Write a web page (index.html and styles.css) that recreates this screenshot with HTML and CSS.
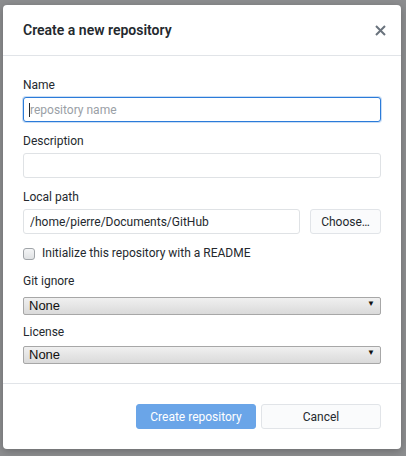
FILE: index.html
```html
<!DOCTYPE html>
<html>
<head>
<meta charset="utf-8">
<link rel="stylesheet" href="styles.css">
</head>
<body>
<div class="dialog">
  <div class="header">
    <h1 class="title">Create a new repository</h1>
    <span class="close">
      <svg width="11" height="11" viewBox="0 0 11 11"><path d="M1 1L10 10M10 1L1 10" stroke="#6a737d" stroke-width="2" fill="none"/></svg>
    </span>
  </div>
  <div class="content">
    <div class="group">
      <label class="label">Name</label>
      <div class="field focused">
        <input class="input" type="text" placeholder="repository name">
        <span class="caret"></span>
      </div>
    </div>
    <div class="group">
      <label class="label">Description</label>
      <div class="field"><input class="input" type="text"></div>
    </div>
    <div class="group">
      <label class="label">Local path</label>
      <div class="path-row">
        <div class="field grow"><input class="input" type="text" value="/home/pierre/Documents/GitHub"></div>
        <button class="btn choose">Choose…</button>
      </div>
    </div>
    <label class="check-row">
      <input class="check" type="checkbox">
      <span>Initialize this repository with a README</span>
    </label>
    <div class="group sel-group first-sel">
      <label class="label">Git ignore</label>
      <div class="select-wrap"><select class="select"><option>None</option></select></div>
    </div>
    <div class="group sel-group">
      <label class="label">License</label>
      <div class="select-wrap"><select class="select"><option>None</option></select></div>
    </div>
  </div>
  <div class="footer">
    <button class="btn primary">Create repository</button>
    <button class="btn cancel">Cancel</button>
  </div>
</div>
</body>
</html>
```
FILE: styles.css
```css
html, body {
  margin: 0;
  padding: 0;
}
body {
  width: 406px;
  height: 456px;
  overflow: hidden;
  background: #8d8e90;
  font-family: Roboto, "Liberation Sans", sans-serif;
  color: #24292e;
}
.dialog {
  margin: 5px 0 0 3px;
  width: 398px;
  height: 444px;
  background: #fff;
  border-radius: 4px;
  box-shadow: 0 2px 8px rgba(0,0,0,0.25);
  display: flex;
  flex-direction: column;
  box-sizing: border-box;
}
.header {
  height: 50px;
  border-bottom: 1px solid #e1e4e8;
  display: flex;
  align-items: center;
  justify-content: space-between;
  padding: 0 15px 0 20px;
}
.title {
  margin: 0;
  font-size: 14px;
  font-weight: 600;
  color: #24292e;
  line-height: 16px;
}
.close {
  display: flex;
  width: 11px;
  height: 11px;
  margin-top: 1px;
}
.content {
  padding: 22px 20px 0 20px;
  flex: 1;
  border-bottom: 1px solid #e1e4e8;
}
.group {
  display: flex;
  flex-direction: column;
  margin-bottom: 12px;
}
.label {
  display: block;
  font-size: 12px;
  line-height: 15px;
  margin-bottom: 4px;
  color: #24292e;
}
.field {
  position: relative;
  height: 25px;
}
.field.grow {
  flex: 1;
}
.input {
  box-sizing: border-box;
  width: 100%;
  height: 25px;
  margin: 0;
  border: 1px solid #dfe2e5;
  border-radius: 3px;
  padding: 0 6px;
  font-family: Roboto, "Liberation Sans", sans-serif;
  font-size: 12px;
  color: #24292e;
  background: #fff;
  outline: none;
}
.input::placeholder {
  color: #9aa0a6;
}
.focused .input {
  border-color: #2b7bd9;
  box-shadow: 0 0 0 1px rgba(43,123,217,0.25);
}
.caret {
  position: absolute;
  left: 6px;
  top: 6px;
  width: 1px;
  height: 14px;
  background: #24292e;
}
.path-row {
  display: flex;
  gap: 10px;
}
.btn {
  box-sizing: border-box;
  height: 25px;
  border-radius: 3px;
  font-family: Roboto, "Liberation Sans", sans-serif;
  font-size: 12px;
  padding: 0;
  margin: 0;
  cursor: default;
}
.choose {
  width: 71px;
  border: 1px solid #e1e4e8;
  background: #fafbfc;
  color: #24292e;
}
.check-row {
  display: flex;
  align-items: center;
  gap: 7px;
  font-size: 12px;
  line-height: 15px;
  margin-top: 0;
  height: 15px;
}
.check {
  appearance: none;
  -webkit-appearance: none;
  width: 12px;
  height: 12px;
  margin: 0;
  border: 1px solid #a0a4a8;
  border-radius: 3px;
  background: linear-gradient(#f4f5f6, #e0e2e4);
  box-sizing: border-box;
}
.sel-group {
  margin-bottom: 12px;
}
.first-sel {
  margin-top: 13px;
}
.first-sel .label {
  margin-bottom: 6px;
}
.select-wrap {
  position: relative;
  height: 18px;
}
.select-wrap::after {
  content: "▼";
  position: absolute;
  right: 6px;
  top: 4px;
  font-size: 8px;
  line-height: 10px;
  color: #111;
  pointer-events: none;
}
.select {
  appearance: none;
  -webkit-appearance: none;
  box-sizing: border-box;
  width: 100%;
  height: 18px;
  margin: 0;
  padding: 0 5px;
  border: 1px solid #a7a7a7;
  border-radius: 2px;
  background: linear-gradient(#f0f0f0, #dadada);
  font-family: "Liberation Sans", Arial, sans-serif;
  font-size: 13px;
  line-height: 16px;
  color: #111;
  outline: none;
}
.footer {
  height: 65px;
  box-sizing: border-box;
  display: flex;
  justify-content: flex-end;
  align-items: flex-start;
  gap: 5px;
  padding: 20px 20px 0 0;
}
.primary {
  width: 120px;
  border: 1px solid #6aa5e8;
  background: #6aa5e8;
  color: #fff;
}
.cancel {
  width: 120px;
  border: 1px solid #e1e4e8;
  background: #fafbfc;
  color: #24292e;
}
```
